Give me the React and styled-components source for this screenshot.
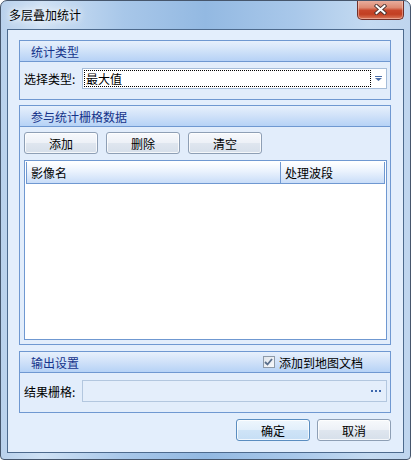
import styled, { createGlobalStyle } from "styled-components";

const GlobalStyle = createGlobalStyle`
  html, body {
    margin: 0;
    padding: 0;
    background: #ffffff;
  }
  body {
    font-family: "Noto Sans CJK SC", "Liberation Sans", sans-serif;
    font-size: 12px;
    color: #000;
  }
  * {
    box-sizing: border-box;
  }
`;

const Frame = styled.div`
  width: 411px;
  height: 460px;
  border: 1px solid #46566c;
  border-radius: 7px 7px 4px 4px;
  background: linear-gradient(
    90deg,
    #b9d1ec 0%,
    #cfe1f4 10%,
    #a8c7e9 30%,
    #93b9e2 50%,
    #a9c8ea 72%,
    #c4daf1 90%,
    #bfd5ee 100%
  );
  padding: 0 6px 6px;
  display: flex;
  flex-direction: column;
  overflow: hidden;
`;

const TitleBar = styled.div`
  position: relative;
  height: 28px;
  display: flex;
  align-items: center;
  padding-left: 2px;
  padding-bottom: 2px;
  font-size: 12px;
  color: #000;
  text-shadow: 0 0 6px #ffffff, 0 0 10px #ffffff;
`;

const CloseBtn = styled.div`
  position: absolute;
  top: -1px;
  right: 0;
  width: 47px;
  height: 20px;
  border: 1px solid #70302a;
  border-top: none;
  border-radius: 0 0 5px 5px;
  background: linear-gradient(
    180deg,
    #eab2a2 0%,
    #dd8a72 40%,
    #c8462a 55%,
    #c23f22 75%,
    #db7a5c 100%
  );
  box-shadow: inset 0 0 0 1px rgba(255, 220, 210, 0.45);
  display: flex;
  align-items: center;
  justify-content: center;
`;

const Client = styled.div`
  flex: 1;
  border: 1px solid #4d6a8d;
  background: #e3eefc;
  padding: 10px 12px 0 11px;
  display: flex;
  flex-direction: column;
`;

const Group = styled.div`
  height: ${(p) => p.$h}px;
  margin-top: ${(p) => p.$mt || 0}px;
  border: 1px solid #6f98d1;
  background: #e2edfb;
  display: flex;
  flex-direction: column;
`;

const GroupHeader = styled.div`
  height: 21px;
  flex: none;
  border-bottom: 1px solid #6f98d1;
  background: linear-gradient(180deg, #e7f0fc 0%, #d2e3f9 45%, #b6d2f6 100%);
  display: flex;
  align-items: center;
  padding: 0 27px 0 11px;
  color: #15338a;
`;

const HeaderTitle = styled.span`
  flex: 1;
`;

const GroupBody = styled.div`
  flex: 1;
  padding: ${(p) => p.$pad};
  display: flex;
  flex-direction: column;
`;

const FieldRow = styled.div`
  display: flex;
  align-items: center;
`;

const Label = styled.span`
  width: 58px;
  flex: none;
  white-space: nowrap;
`;

const Combo = styled.div`
  width: 305px;
  height: 21px;
  border: 1px solid #a6bdd9;
  background: #ffffff;
  display: flex;
  padding: 1px;
`;

const ComboText = styled.div`
  flex: 1;
  border: 1px dotted #000;
  display: flex;
  align-items: center;
  padding-left: 1px;
  line-height: 1;
`;

const ComboArrow = styled.div`
  width: 14px;
  display: flex;
  align-items: center;
  justify-content: center;
`;

const PathInput = styled.div`
  width: 305px;
  height: 22px;
  border: 1px solid #b3c7df;
  background: #e4eefb;
  display: flex;
  align-items: center;
  justify-content: flex-end;
  padding-right: 4px;
`;

const ButtonRow = styled.div`
  display: flex;
  gap: ${(p) => p.$gap}px;
  justify-content: ${(p) => p.$justify || "flex-start"};
  margin-top: ${(p) => p.$mt || 0}px;
`;

const Button = styled.div`
  width: 74px;
  height: 22px;
  border: 1px solid ${(p) => (p.$primary ? "#5a8dc0" : "#8e9fb5")};
  border-radius: 3px;
  background: ${(p) =>
    p.$primary
      ? "linear-gradient(180deg, #eef6fd 0%, #e2effb 48%, #cfe4f7 52%, #c6def5 100%)"
      : "linear-gradient(180deg, #f7f9fc 0%, #edf1f7 48%, #dfe6ef 52%, #d6dfea 100%)"};
  box-shadow: inset 0 0 0 1px rgba(255, 255, 255, 0.75);
  display: flex;
  align-items: center;
  justify-content: center;
`;

const ListView = styled.div`
  height: 180px;
  margin-top: 6px;
  border: 1px solid #6f98d1;
  background: #ffffff;
  padding: 1px;
`;

const ListHeader = styled.div`
  height: 22px;
  display: grid;
  grid-template-columns: 254px 1fr;
  border: 1px solid #6f98d1;
  border-top: none;
  background: linear-gradient(180deg, #ffffff 0%, #eaf2fd 45%, #c9ddf8 100%);
`;

const HeaderCell = styled.div`
  display: flex;
  align-items: center;
  padding-left: 4px;
  border-right: ${(p) => (p.$last ? "none" : "1px solid #6f98d1")};
`;

const CheckWrap = styled.label`
  display: flex;
  align-items: center;
  gap: 4px;
  color: #000;
`;

const CheckBox = styled.span`
  width: 12px;
  height: 12px;
  border: 1px solid #8e9aa8;
  background: linear-gradient(135deg, #dfe5ec 0%, #f8f9fb 100%);
  display: flex;
  align-items: center;
  justify-content: center;
`;

export default function App() {
  return (
    <>
      <GlobalStyle />
      <Frame>
        <TitleBar>
          多层叠加统计
          <CloseBtn>
            <svg width="13" height="11" viewBox="0 0 13 11">
              <path
                d="M2.5 2 L10.5 9 M10.5 2 L2.5 9"
                stroke="#4a3330"
                strokeWidth="3.8"
                strokeLinecap="square"
              />
              <path
                d="M2.5 2 L10.5 9 M10.5 2 L2.5 9"
                stroke="#ffffff"
                strokeWidth="2"
                strokeLinecap="square"
              />
            </svg>
          </CloseBtn>
        </TitleBar>

        <Client>
          <Group $h={60}>
            <GroupHeader>
              <HeaderTitle>统计类型</HeaderTitle>
            </GroupHeader>
            <GroupBody $pad="6px 0 0 4px">
              <FieldRow>
                <Label>选择类型:</Label>
                <Combo>
                  <ComboText>最大值</ComboText>
                  <ComboArrow>
                    <svg width="7" height="5" viewBox="0 0 7 5">
                      <rect x="0" y="0" width="7" height="1" fill="#4c6fa8" />
                      <path d="M0 2 H7 L3.5 5 Z" fill="#4c6fa8" />
                    </svg>
                  </ComboArrow>
                </Combo>
              </FieldRow>
            </GroupBody>
          </Group>

          <Group $h={240} $mt={5}>
            <GroupHeader>
              <HeaderTitle>参与统计栅格数据</HeaderTitle>
            </GroupHeader>
            <GroupBody $pad="5px 3px 0 4px">
              <ButtonRow $gap={8}>
                <Button>添加</Button>
                <Button>删除</Button>
                <Button>清空</Button>
              </ButtonRow>
              <ListView>
                <ListHeader>
                  <HeaderCell>影像名</HeaderCell>
                  <HeaderCell $last>处理波段</HeaderCell>
                </ListHeader>
              </ListView>
            </GroupBody>
          </Group>

          <Group $h={62} $mt={6}>
            <GroupHeader>
              <HeaderTitle>输出设置</HeaderTitle>
              <CheckWrap>
                <CheckBox>
                  <svg width="9" height="8" viewBox="0 0 9 8">
                    <path
                      d="M1 4 L3.5 6.5 L8 1"
                      stroke="#5a6f8c"
                      strokeWidth="1.8"
                      fill="none"
                    />
                  </svg>
                </CheckBox>
                添加到地图文档
              </CheckWrap>
            </GroupHeader>
            <GroupBody $pad="7px 0 0 4px">
              <FieldRow>
                <Label>结果栅格:</Label>
                <PathInput>
                  <svg width="11" height="3" viewBox="0 0 11 3">
                    <rect x="0" y="0" width="2" height="2" fill="#3d67ad" />
                    <rect x="4" y="0" width="2" height="2" fill="#3d67ad" />
                    <rect x="8" y="0" width="2" height="2" fill="#3d67ad" />
                  </svg>
                </PathInput>
              </FieldRow>
            </GroupBody>
          </Group>

          <ButtonRow $gap={7} $justify="flex-end" $mt={6}>
            <Button $primary>确定</Button>
            <Button>取消</Button>
          </ButtonRow>
        </Client>
      </Frame>
    </>
  );
}
